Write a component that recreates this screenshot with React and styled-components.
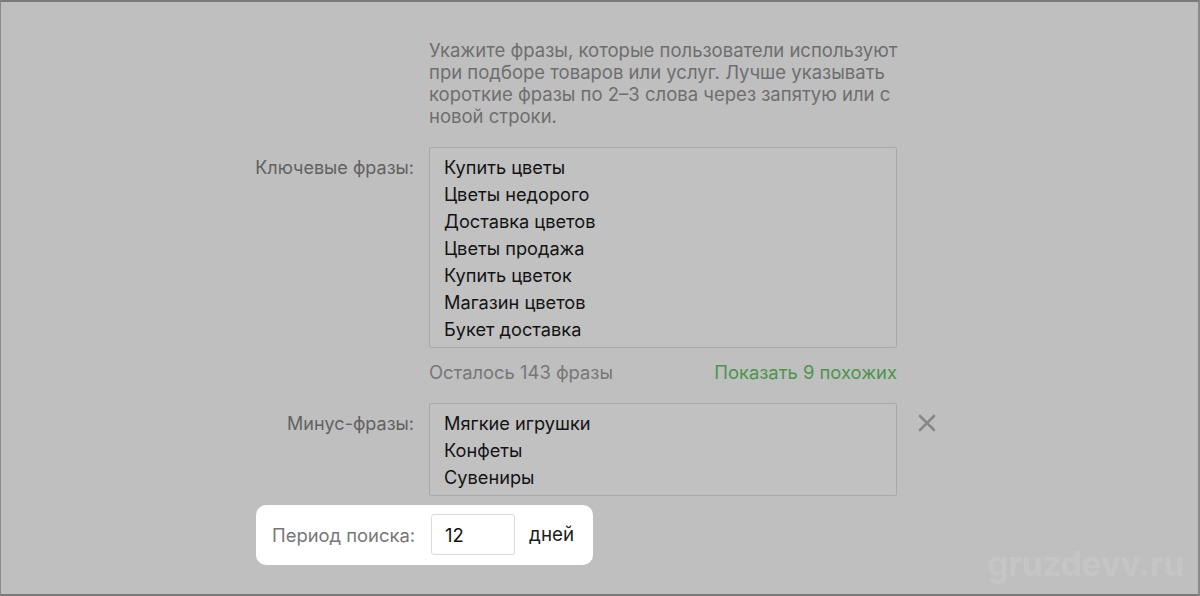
import React from 'react';
import styled, { createGlobalStyle } from 'styled-components';

const GlobalStyle = createGlobalStyle`
    html, body {
        margin: 0;
        padding: 0;
        background: #bfbfbf;
    }
    body {
        font-family: Inter, "Liberation Sans", Arial, sans-serif;
    }
`;

const Frame = styled.div`
    position: relative;
    box-sizing: border-box;
    width: 1200px;
    height: 596px;
    overflow: hidden;
    background: #bfbfbf;
    border-top: 2px solid #7a7a7a;
    border-left: 1px solid #8a8a8a;
    border-right: 2px solid #8a8a8a;
    border-bottom: 2px solid #7a7a7a;
    padding-top: 37px;
`;

const Form = styled.div`
    display: grid;
    grid-template-columns: 413px 468px 40px;
    column-gap: 15px;
    align-items: start;
`;

const Hint = styled.p`
    grid-column: 2;
    margin: 0 0 20px;
    font-size: 18.5px;
    line-height: 22px;
    color: #6e6e6e;
    white-space: nowrap;
`;

const Label = styled.div`
    grid-column: 1;
    text-align: right;
    font-size: 18px;
    line-height: 22px;
    color: #626262;
    padding-top: ${({ offset }) => offset}px;
`;

const PhraseBox = styled.div`
    grid-column: 2;
    box-sizing: border-box;
    height: ${({ boxHeight }) => boxHeight}px;
    border: 1px solid #a9a9a9;
    border-radius: 2px;
    background: #c1c1c1;
    padding: 6px 14px;
`;

const Phrase = styled.div`
    font-size: 18.2px;
    line-height: 27px;
    color: #141414;
`;

const Meta = styled.div`
    grid-column: 2;
    display: flex;
    justify-content: space-between;
    font-size: 18.4px;
    line-height: 22px;
    margin: 13px 0 20px;
`;

const Counter = styled.span`
    color: #777;
`;

const SimilarLink = styled.span`
    color: #4c944c;
`;

const ClearButton = styled.button`
    grid-column: 3;
    margin: 11px 0 0 6px;
    padding: 0;
    border: none;
    background: none;
    width: 18px;
    height: 18px;
    cursor: pointer;
    display: flex;
`;

const PeriodCard = styled.div`
    display: inline-flex;
    align-items: center;
    margin: 9px 0 0 255px;
    padding: 9px 19px 10px 16px;
    background: #fff;
    border-radius: 10px;
`;

const PeriodLabel = styled.span`
    font-size: 18.4px;
    color: #777;
    margin-right: 16px;
`;

const PeriodInput = styled.div`
    box-sizing: border-box;
    width: 84px;
    height: 41px;
    border: 1px solid #dcdcdc;
    border-radius: 3px;
    padding-left: 13px;
    display: flex;
    align-items: center;
    font-size: 18.5px;
    color: #111;
`;

const Unit = styled.span`
    font-size: 18.8px;
    color: #1c1c1c;
    margin-left: 14px;
`;

const Watermark = styled.div`
    position: absolute;
    right: 14px;
    bottom: 10px;
    font-size: 34px;
    font-weight: bold;
    letter-spacing: -0.5px;
    color: #c5c5c5;
    filter: blur(0.6px);
`;

const keywords = [
    'Купить цветы',
    'Цветы недорого',
    'Доставка цветов',
    'Цветы продажа',
    'Купить цветок',
    'Магазин цветов',
    'Букет доставка',
];

const minusWords = ['Мягкие игрушки', 'Конфеты', 'Сувениры'];

function App() {
    return (
        <>
            <GlobalStyle />
            <Frame>
                <Form>
                    <Hint>
                        Укажите фразы, которые пользователи используют<br />
                        при подборе товаров или услуг. Лучше указывать<br />
                        короткие фразы по 2–3 слова через запятую или с<br />
                        новой строки.
                    </Hint>

                    <Label offset={10}>Ключевые фразы:</Label>
                    <PhraseBox boxHeight={201}>
                        {keywords.map((k) => (
                            <Phrase key={k}>{k}</Phrase>
                        ))}
                    </PhraseBox>

                    <Meta>
                        <Counter>Осталось 143 фразы</Counter>
                        <SimilarLink>Показать 9 похожих</SimilarLink>
                    </Meta>

                    <Label offset={10}>Минус-фразы:</Label>
                    <PhraseBox boxHeight={93}>
                        {minusWords.map((k) => (
                            <Phrase key={k}>{k}</Phrase>
                        ))}
                    </PhraseBox>
                    <ClearButton aria-label="Очистить">
                        <svg width="18" height="18" viewBox="0 0 18 18">
                            <path d="M2 2 L16 16 M16 2 L2 16" stroke="#878787" strokeWidth="2.6" strokeLinecap="round" />
                        </svg>
                    </ClearButton>
                </Form>

                <PeriodCard>
                    <PeriodLabel>Период поиска:</PeriodLabel>
                    <PeriodInput>12</PeriodInput>
                    <Unit>дней</Unit>
                </PeriodCard>

                <Watermark>gruzdevv.ru</Watermark>
            </Frame>
        </>
    );
}

export default App;
